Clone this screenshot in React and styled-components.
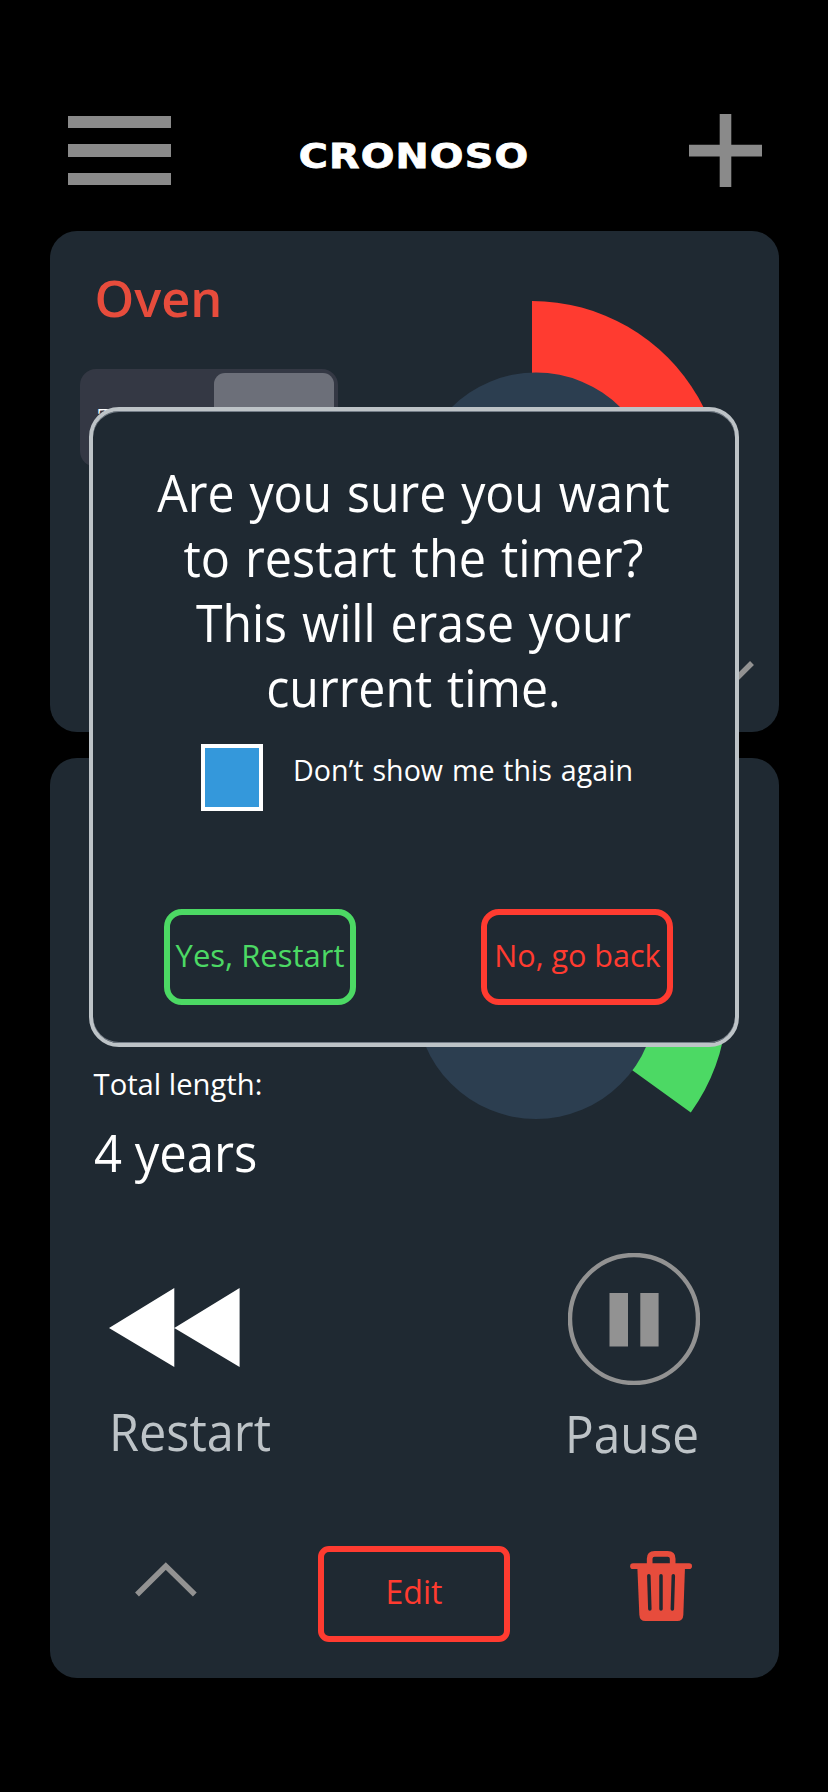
import React from 'react';
import styled, { createGlobalStyle } from 'styled-components';

const color = {
  card: '#1f2932',
  disc: '#2c3e50',
  red: '#ff3b30',
  brick: '#e74c3c',
  green: '#4cd964',
  silver: '#bdc3c7',
  grey: '#929292',
};

const GlobalStyle = createGlobalStyle`
  * { box-sizing: border-box; }
  body { margin: 0; background: #000; }
  svg { display: block; flex: none; }
`;

const Screen = styled.div`
  position: relative;
  width: 828px;
  height: 1792px;
  overflow: hidden;
  background: #000;
  color: #fff;
  font-family: "Open Sans", "Noto Sans", sans-serif;
`;

const Header = styled.header`
  display: grid;
  grid-template-columns: 103px 1fr 103px;
  align-items: start;
  height: 231px;
  padding: 114px 66px 0 68px;
`;

const MenuButton = styled.div`
  display: flex;
  flex-direction: column;
  gap: 16px;
  padding-top: 2px;
`;

const MenuBar = styled.span`
  height: 12.4px;
  background: #8a8a8a;
`;

const Brand = styled.h1`
  margin: 23px 0 0 -2px;
  font: 700 33px/40px "DejaVu Sans", sans-serif;
  letter-spacing: 1px;
  text-align: center;
  -webkit-text-stroke: 0.8px #fff;
  transform: scaleX(1.2);
`;

const AddIcon = styled.svg`
  justify-self: end;
`;

const CardList = styled.main`
  display: flex;
  flex-direction: column;
  gap: 26px;
  width: 729px;
  margin-left: 50px;
`;

const Card = styled.section`
  display: flex;
  flex-direction: column;
  height: ${(p) => p.$height}px;
  border-radius: 27px;
  background: ${color.card};
`;

const CardBody = styled.div`
  display: flex;
`;

const Details = styled.div`
  flex: none;
  width: ${(p) => p.$width}px;
  padding-top: ${(p) => p.$top}px;
`;

const Text = styled.div`
  font-size: ${(p) => p.$size || 51}px;
  line-height: ${(p) => p.$line || 60}px;
  font-weight: ${(p) => p.$weight || 370};
  color: ${(p) => p.$color || 'inherit'};
  white-space: nowrap;
  word-spacing: ${(p) => p.$word || 0}px;
  transform: scaleX(${(p) => p.$stretch || 1});
  transform-origin: ${(p) => (p.$center ? 'center' : 'left')};
  text-align: ${(p) => (p.$center ? 'center' : 'left')};
`;

const TimerName = styled(Text)`
  padding-left: 45px;
`;

const Segmented = styled.div`
  display: flex;
  align-items: flex-start;
  justify-content: space-between;
  width: 258px;
  height: 98px;
  margin: 42px 0 0 30px;
  padding: 4px 4px 4px 18px;
  border-radius: 16px;
  background: #343844;
`;

const SegmentLabel = styled.span`
  padding-top: 33px;
  font: 700 26px/24px "Liberation Serif", serif;
`;

const SegmentThumb = styled.span`
  width: 120px;
  height: 90px;
  border-radius: 11px;
  background: #6c6f79;
`;

const Dial = styled.svg`
  margin-top: ${(p) => p.$top}px;
`;

const ExpandRow = styled.div`
  display: flex;
  justify-content: flex-end;
  padding: 20px 25px 0 0;
`;

const TotalLabel = styled(Text)`
  padding-left: 44px;
`;

const TotalValue = styled(Text)`
  margin: 18px 0 0 44px;
`;

const Controls = styled.div`
  display: flex;
  justify-content: space-between;
  margin-top: 61px;
  padding: 0 79px 0 59px;
`;

const Control = styled.div`
  width: ${(p) => p.$width}px;
  padding-top: ${(p) => p.$top || 0}px;
`;

const ControlLabel = styled(Text)`
  margin-top: ${(p) => p.$gap}px;
  color: ${color.silver};
`;

const PauseIcon = styled.svg`
  margin-left: 3px;
`;

const Actions = styled.div`
  display: flex;
  align-items: flex-start;
  justify-content: space-between;
  margin-top: 83px;
  padding: 0 87px 0 85px;
`;

const CollapseIcon = styled.svg`
  margin-top: 16px;
`;

const TrashIcon = styled.svg`
  margin-top: 5px;
`;

const OutlineButton = styled.button`
  width: 192px;
  height: 96px;
  display: flex;
  justify-content: center;
  align-items: flex-start;
  padding: 20px 0 0;
  border: 6px solid currentColor;
  border-radius: ${(p) => p.$radius}px;
  background: transparent;
  color: ${(p) => p.$tone};
  font-family: inherit;
`;

const EditButton = styled(OutlineButton)`
  margin-left: 1px;
`;

const Modal = styled.div`
  position: absolute;
  left: 89px;
  top: 407px;
  width: 650px;
  height: 640px;
  padding-top: 49px;
  border: 4px solid ${color.silver};
  border-radius: 30px;
  background: ${color.card};
  box-shadow: inset 0 1px #747d88, inset 0 -1px #747d88;
`;

const Question = styled.div`
  margin-left: -1px;
`;

const OptOut = styled.label`
  display: flex;
  align-items: flex-start;
  gap: 30px;
  margin-top: 24px;
  padding-left: 108px;
`;

const Checkbox = styled.span`
  flex: none;
  width: 62px;
  height: 67px;
  border: 4px solid #fff;
  background: #3498db;
`;

const OptOutText = styled(Text)`
  margin-top: 8px;
`;

const ModalButtons = styled.div`
  display: flex;
  gap: 125px;
  margin-top: 98px;
  padding-left: 71px;
`;

const questionLines = [
  { text: 'Are you sure you want', stretch: 0.945, word: 2.5 },
  { text: 'to restart the timer?', stretch: 0.952, word: 2.5 },
  { text: 'This will erase your', stretch: 0.944, word: 2.5 },
  { text: 'current time.', stretch: 0.945, word: 2.5 },
];

export default function App() {
  return (
    <>
      <GlobalStyle />
      <Screen>
        <Header>
          <MenuButton>
            <MenuBar />
            <MenuBar />
            <MenuBar />
          </MenuButton>
          <Brand>CRONOSO</Brand>
          <AddIcon width="73" height="73" viewBox="0 0 73 73">
            <path d="M36.500 0v73M0 36.600h73" stroke="#8a8a8a" strokeWidth="11.6" />
          </AddIcon>
        </Header>

        <CardList>
          <Card $height={501}>
            <CardBody>
              <Details $width={290} $top={36}>
                <TimerName $weight={550} $color={color.brick} $stretch={0.99}>Oven</TimerName>
                <Segmented>
                  <SegmentLabel>T</SegmentLabel>
                  <SegmentThumb />
                </Segmented>
              </Details>
              <Dial $top={70} width="384" height="340" viewBox="0 0 384 340">
                <path d="M192 192V0A192 192 0 0 1 358 288Z" fill={color.red} />
                <circle cx="196" cy="191.5" r="120" fill={color.disc} />
              </Dial>
            </CardBody>
            <ExpandRow>
              <svg width="61" height="34" viewBox="0 0 61 34">
                <path d="M2 2L30.5 30.5L59 2" fill="none" stroke={color.grey} strokeWidth="5.5" />
              </svg>
            </ExpandRow>
          </Card>

          <Card $height={920}>
            <CardBody>
              <Details $width={293} $top={306}>
                <TotalLabel $size={29.5} $line={40} $stretch={0.99}>Total length:</TotalLabel>
                <TotalValue $stretch={0.96}>4 years</TotalValue>
              </Details>
              <Dial $top={50} width="384" height="384" viewBox="0 0 384 384">
                <path d="M192 192V0A192 192 0 0 1 347.8 304.5Z" fill={color.green} />
                <circle cx="193" cy="191" r="120" fill={color.disc} />
              </Dial>
            </CardBody>

            <Controls>
              <Control $width={161} $top={35}>
                <svg width="131" height="79" viewBox="0 0 131 79">
                  <path d="M0 40L65.3 0V79ZM65.3 40L130.6 0V79Z" fill="#fff" />
                </svg>
                <ControlLabel $gap={34} $stretch={0.953}>Restart</ControlLabel>
              </Control>
              <Control $width={135}>
                <PauseIcon width="132" height="132" viewBox="0 0 132 132">
                  <circle cx="66" cy="66" r="64" fill="none" stroke={color.grey} strokeWidth="4.4" />
                  <path d="M41.500 40H60V93.500H41.500ZM72.300 40H90.600V93.500H72.300Z" fill={color.grey} />
                </PauseIcon>
                <ControlLabel $gap={18} $stretch={0.935}>Pause</ControlLabel>
              </Control>
            </Controls>

            <Actions>
              <CollapseIcon width="62" height="35" viewBox="0 0 62 35">
                <path d="M2 32.500L30.800 4L59.800 32.500" fill="none" stroke={color.grey} strokeWidth="5.5" />
              </CollapseIcon>
              <EditButton $radius={11} $tone={color.red}>
                <Text $size={32} $line={40} $center>Edit</Text>
              </EditButton>
              <TrashIcon width="62" height="70" viewBox="628 993 186 210">
                <g fill="none" stroke={color.brick} strokeWidth="17" strokeLinecap="round">
                  <path d="M687 1036V1016Q687 1001.500 702 1001.500H741Q756 1001.500 756 1016V1036" />
                  <path d="M637 1038.500H805.500" />
                </g>
                <path d="M650 1040H793L788 1184Q787 1203 770 1203H674Q657 1203 656 1184Z" fill={color.brick} />
                <path d="M684.500 1067L687.500 1167M721 1067V1167M758 1067L755 1167" stroke={color.card} strokeWidth="10.5" strokeLinecap="round" />
              </TrashIcon>
            </Actions>
          </Card>
        </CardList>

        <Modal role="dialog">
          <Question>
            {questionLines.map((line) => (
              <Text key={line.text} $line={65} $stretch={line.stretch} $word={line.word} $center>
                {line.text}
              </Text>
            ))}
          </Question>
          <OptOut>
            <Checkbox />
            <OptOutText $size={29.5} $line={36} $stretch={0.97} $word={1.5}>
              Don’t show me this again
            </OptOutText>
          </OptOut>
          <ModalButtons>
            <OutlineButton $radius={18} $tone={color.green}>
              <Text $size={31} $line={40} $center>Yes, Restart</Text>
            </OutlineButton>
            <OutlineButton $radius={18} $tone={color.red}>
              <Text $size={31} $line={40} $stretch={0.985} $center>No, go back</Text>
            </OutlineButton>
          </ModalButtons>
        </Modal>
      </Screen>
    </>
  );
}
